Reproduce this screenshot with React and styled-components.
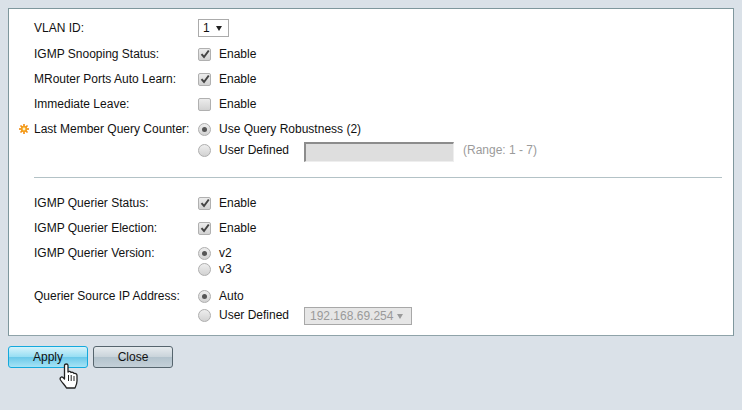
import React from 'react';
import styled, { createGlobalStyle } from 'styled-components';

const GlobalStyle = createGlobalStyle`
  html, body {
    margin: 0;
    height: 100%;
    background: #dae1e8;
    font-family: "Liberation Sans", Arial, sans-serif;
    font-size: 12px;
    color: #111;
  }
`;

const Page = styled.div`
  padding: 8px 8px 0;
  width: 726px;
`;

const Panel = styled.div`
  box-sizing: border-box;
  height: 328px;
  background: #fff;
  border: 1px solid #7f979d;
  border-bottom-color: #8fa3a9;
  padding: 11px 11px 0 10px;
`;

const Field = styled.div`
  display: flex;
  align-items: flex-start;
  margin-bottom: ${p => p.$after ?? 9}px;
`;

const IconSlot = styled.span`
  flex: none;
  width: 15px;
  height: 16px;
  display: flex;
  align-items: center;
`;

const Label = styled.div`
  flex: none;
  width: 164px;
  line-height: 16px;
`;

const Options = styled.div`
  display: flex;
  flex-direction: column;
  gap: ${p => p.$gap ?? 0}px;
`;

const Option = styled.div`
  display: flex;
  align-items: center;
  height: 16px;
  line-height: 16px;
`;

const Caption = styled.span`
  margin-left: 8px;
  width: ${p => (p.$wide ? '76px' : 'auto')};
  flex: none;
`;

const Check = styled.span`
  box-sizing: border-box;
  flex: none;
  width: 13px;
  height: 13px;
  border: 1px solid #b0b0b0;
  border-radius: 2px;
  background: linear-gradient(#ececec, #d2d2d2);
  display: flex;
  align-items: center;
  justify-content: center;
`;

const Radio = styled.span`
  box-sizing: border-box;
  flex: none;
  width: 13px;
  height: 13px;
  margin-top: 1px;
  border: 1px solid #aeaeae;
  border-radius: 50%;
  background: linear-gradient(#eeeeee, #d2d2d2);
  display: flex;
  align-items: center;
  justify-content: center;
  &::after {
    content: '';
    display: ${p => (p.$on ? 'block' : 'none')};
    width: 5px;
    height: 5px;
    border-radius: 50%;
    background: #555;
  }
`;

const Caret = styled.span`
  width: 0;
  height: 0;
  border-left: 3px solid transparent;
  border-right: 3px solid transparent;
  border-top: 5px solid ${p => p.$color};
`;

const Dropdown = styled.div`
  box-sizing: border-box;
  width: 31px;
  height: 18px;
  margin-top: -1px;
  padding: 0 6px 0 4px;
  display: flex;
  align-items: center;
  justify-content: space-between;
  border: 1px solid #ababab;
  background: #fff;
`;

const DisabledDropdown = styled.div`
  box-sizing: border-box;
  align-self: flex-start;
  width: 108px;
  height: 18px;
  margin-left: 9px;
  padding: 0 8px 0 5px;
  display: flex;
  align-items: center;
  justify-content: space-between;
  border: 1px solid #a8a8a8;
  background: #e6e6e6;
  color: #9a9a9a;
`;

const DisabledInput = styled.div`
  box-sizing: border-box;
  align-self: flex-start;
  width: 150px;
  height: 20px;
  margin-left: 9px;
  background: #dedede;
  border-style: solid;
  border-width: 2px 1px 1px 2px;
  border-color: #8c8c8c #eeeeee #eeeeee #8c8c8c;
`;

const Hint = styled.span`
  margin-left: 9px;
  color: #9b9b9b;
`;

const Divider = styled.hr`
  border: 0;
  height: 1px;
  background: #b3c2c6;
  margin: 19px 0 17px 15px;
`;

const Actions = styled.div`
  display: flex;
  gap: 5px;
  margin-top: 10px;
  position: relative;
`;

const Button = styled.button`
  box-sizing: border-box;
  width: 80px;
  height: 22px;
  padding: 0;
  border-radius: 3px;
  font: 12px "Liberation Sans", Arial, sans-serif;
  color: #111;
  border: 1px solid ${p => (p.$active ? '#14a9dd' : '#56656e')};
  background: ${p =>
    p.$active
      ? 'linear-gradient(#d6f3fb 0%, #97def3 50%, #6cc9e9 52%, #a6e3f5 100%)'
      : 'linear-gradient(#e6ebee 0%, #c9d3da 50%, #b3c3cd 52%, #c4d0d8 100%)'};
`;

const Pointer = styled.svg`
  position: absolute;
  left: 51px;
  top: 17px;
`;

const Gear = () => (
  <svg width="10" height="10" viewBox="0 0 10 10">
    <g stroke="#f08a12" strokeWidth="1.6">
      <line x1="5" y1="0" x2="5" y2="10" />
      <line x1="0" y1="5" x2="10" y2="5" />
      <line x1="1.5" y1="1.5" x2="8.5" y2="8.5" />
      <line x1="8.5" y1="1.5" x2="1.5" y2="8.5" />
    </g>
    <circle cx="5" cy="5" r="3.2" fill="#f5a01c" />
    <circle cx="5" cy="5" r="1.4" fill="#fff3c8" />
  </svg>
);

const Tick = () => (
  <svg width="10" height="10" viewBox="0 0 10 10">
    <path d="M1.5 5.2 L4 8 L8.8 1.5" fill="none" stroke="#444" strokeWidth="2" />
  </svg>
);

const Hand = () => (
  <Pointer width="20" height="27" viewBox="0 0 20 27">
    <path
      d="M5.5 2.5 C5.5 0.5 9 0.5 9 2.5 L9 9 C10 8 11.5 8.2 12 9.5 C13 9 14.5 9.3 15 10.5 C16 10 18 10.5 18 12.5 L18 18 C18 21 17 23 16 25 L7.5 25 C6.5 23 3.5 20 1.5 17 C0.3 15 2.5 13 4 14.5 L5.5 16 Z"
      fill="#fff"
      stroke="#222"
      strokeWidth="1.3"
      strokeLinejoin="round"
    />
    <path d="M9.5 12 V18 M12.2 12 V18 M15 13 V18" stroke="#222" strokeWidth="1" />
  </Pointer>
);

const CheckField = ({ label, checked }) => (
  <Field>
    <IconSlot />
    <Label>{label}</Label>
    <Option>
      <Check>{checked && <Tick />}</Check>
      <Caption>Enable</Caption>
    </Option>
  </Field>
);

export default function App() {
  return (
    <Page>
      <GlobalStyle />
      <Panel>
        <Field>
          <IconSlot />
          <Label>VLAN ID:</Label>
          <Dropdown>
            1
            <Caret $color="#222" />
          </Dropdown>
        </Field>
        <CheckField label="IGMP Snooping Status:" checked />
        <CheckField label="MRouter Ports Auto Learn:" checked />
        <CheckField label="Immediate Leave:" />
        <Field $after={0}>
          <IconSlot>
            <Gear />
          </IconSlot>
          <Label>Last Member Query Counter:</Label>
          <Options $gap={5}>
            <Option>
              <Radio $on />
              <Caption>Use Query Robustness (2)</Caption>
            </Option>
            <Option>
              <Radio />
              <Caption $wide>User Defined</Caption>
              <DisabledInput />
              <Hint>(Range: 1 - 7)</Hint>
            </Option>
          </Options>
        </Field>
        <Divider />
        <CheckField label="IGMP Querier Status:" checked />
        <CheckField label="IGMP Querier Election:" checked />
        <Field $after={11}>
          <IconSlot />
          <Label>IGMP Querier Version:</Label>
          <Options>
            <Option>
              <Radio $on />
              <Caption>v2</Caption>
            </Option>
            <Option>
              <Radio />
              <Caption>v3</Caption>
            </Option>
          </Options>
        </Field>
        <Field>
          <IconSlot />
          <Label>Querier Source IP Address:</Label>
          <Options $gap={3}>
            <Option>
              <Radio $on />
              <Caption>Auto</Caption>
            </Option>
            <Option>
              <Radio />
              <Caption $wide>User Defined</Caption>
              <DisabledDropdown>
                192.168.69.254
                <Caret $color="#9a9a9a" />
              </DisabledDropdown>
            </Option>
          </Options>
        </Field>
      </Panel>
      <Actions>
        <Button $active>Apply</Button>
        <Button>Close</Button>
        <Hand />
      </Actions>
    </Page>
  );
}
